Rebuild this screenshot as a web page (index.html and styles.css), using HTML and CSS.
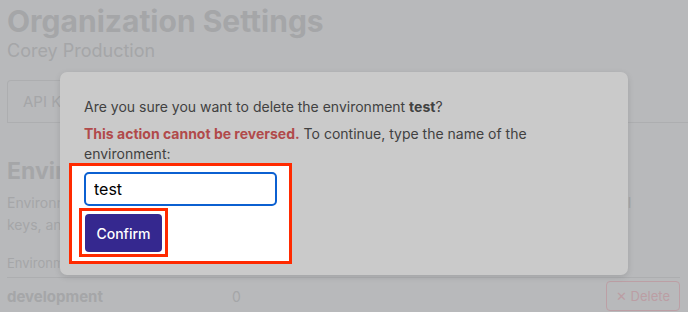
FILE: index.html
```html
<!DOCTYPE html>
<html lang="en">
<head>
    <meta charset="UTF-8">
    <title>Organization Settings</title>
    <link rel="stylesheet" href="styles.css">
</head>
<body>
    <div class="page">
        <h1 class="title">Organization Settings</h1>
        <div class="subtitle">Corey Production</div>
        <div class="tabs">
            <span class="tab">API Keys</span>
            <span class="tab">Environments</span>
        </div>
        <h2 class="section-title">Environments</h2>
        <p class="section-text">Environments keep your data apart: each environment has its own event data, settings and API keys, and nothing is shared between them.</p>
        <div class="table">
            <div class="table-head">
                <span class="col-name">Environment</span>
                <span class="col-count">Events</span>
            </div>
            <div class="table-row">
                <span class="col-name env-name">development</span>
                <span class="col-count">0</span>
                <button class="delete-btn">&#10005; Delete</button>
            </div>
        </div>
    </div>

    <div class="modal">
        <p class="modal-text">Are you sure you want to delete the environment <b>test</b>?</p>
        <p class="modal-text last"><span class="warning">This action cannot be reversed.</span> To continue, type the name of the environment:</p>
        <div class="highlight">
            <input class="env-input" type="text" value="test">
            <div class="btn-highlight">
                <button class="confirm-btn">Confirm</button>
            </div>
        </div>
    </div>
</body>
</html>
```

FILE: styles.css
```css
body {
    margin: 0;
    padding: 0;
    font-family: 'Inter', sans-serif;
    background-color: #b8b9bb;
    color: #a5a6a8;
    width: 688px;
    height: 312px;
    overflow: hidden;
    position: relative;
}
.page {
    padding: 3px 8px 0 7px;
}
.title {
    margin: 0;
    font-size: 30px;
    font-weight: 700;
    letter-spacing: 0;
    line-height: 36px;
}
.subtitle {
    font-size: 18px;
    line-height: 22px;
    margin-top: 1px;
}
.tabs {
    display: flex;
    margin-top: 18px;
    margin-right: -8px;
    border-bottom: 1px solid #adaeb0;
}
.tab {
    padding: 11px 15px;
    border: 1px solid #adaeb0;
    border-bottom: none;
    border-radius: 4px 4px 0 0;
    font-size: 15px;
    margin-right: 4px;
}
.section-title {
    margin: 34px 0 0;
    font-size: 23px;
    font-weight: 700;
    line-height: 28px;
}
.section-text {
    margin: 7px 0 0;
    font-size: 14px;
    line-height: 22px;
    width: 660px;
}
.table {
    margin-top: 19px;
}
.table-head {
    display: flex;
    font-size: 13px;
    line-height: 16px;
    padding-bottom: 6px;
    border-bottom: 1px solid #adaeb0;
}
.table-row {
    display: flex;
    align-items: center;
    padding-top: 3px;
}
.col-name {
    width: 225px;
}
.col-count {
    flex: 1;
    font-size: 14px;
}
.env-name {
    font-weight: 700;
    font-size: 15px;
}
.delete-btn {
    font-family: 'Inter', sans-serif;
    font-size: 13px;
    color: #bb9ea4;
    background: none;
    border: 1px solid #bc9fa5;
    border-radius: 4px;
    padding: 6px 9px;
}
.modal {
    position: absolute;
    left: 60px;
    top: 72px;
    width: 568px;
    height: 203px;
    box-sizing: border-box;
    padding: 25px 24px 0;
    background-color: #cacaca;
    border-radius: 7px;
    box-shadow: 0 2px 6px rgba(0, 0, 0, 0.12);
}
.modal-text {
    margin: 0 0 7px;
    font-size: 14px;
    line-height: 20px;
    color: #414141;
    width: 470px;
}
.modal-text.last {
    margin-bottom: 0;
}
.warning {
    color: #b14a4b;
    font-weight: 700;
}
.highlight {
    margin: -1px 0 0 -15px;
    width: 223px;
    height: 101px;
    box-sizing: border-box;
    border: 3px solid #ff2a00;
    background-color: #ffffff;
    padding: 6px 0 0 12px;
}
.env-input {
    display: block;
    width: 193px;
    height: 34px;
    box-sizing: border-box;
    border: 2px solid #0b60d1;
    border-radius: 5px;
    font-family: 'Inter', sans-serif;
    font-size: 16px;
    padding: 0 8px;
    color: #000000;
    outline: none;
}
.btn-highlight {
    display: inline-block;
    margin: 2px 0 0 -5px;
    border: 3px solid #ff2a00;
    padding: 3px 3px 2px;
}
.confirm-btn {
    display: block;
    width: 77px;
    height: 38px;
    border: none;
    border-radius: 4px;
    background-color: #35288f;
    color: #ffffff;
    font-family: 'Inter', sans-serif;
    font-size: 14px;
    font-weight: 500;
}
```
